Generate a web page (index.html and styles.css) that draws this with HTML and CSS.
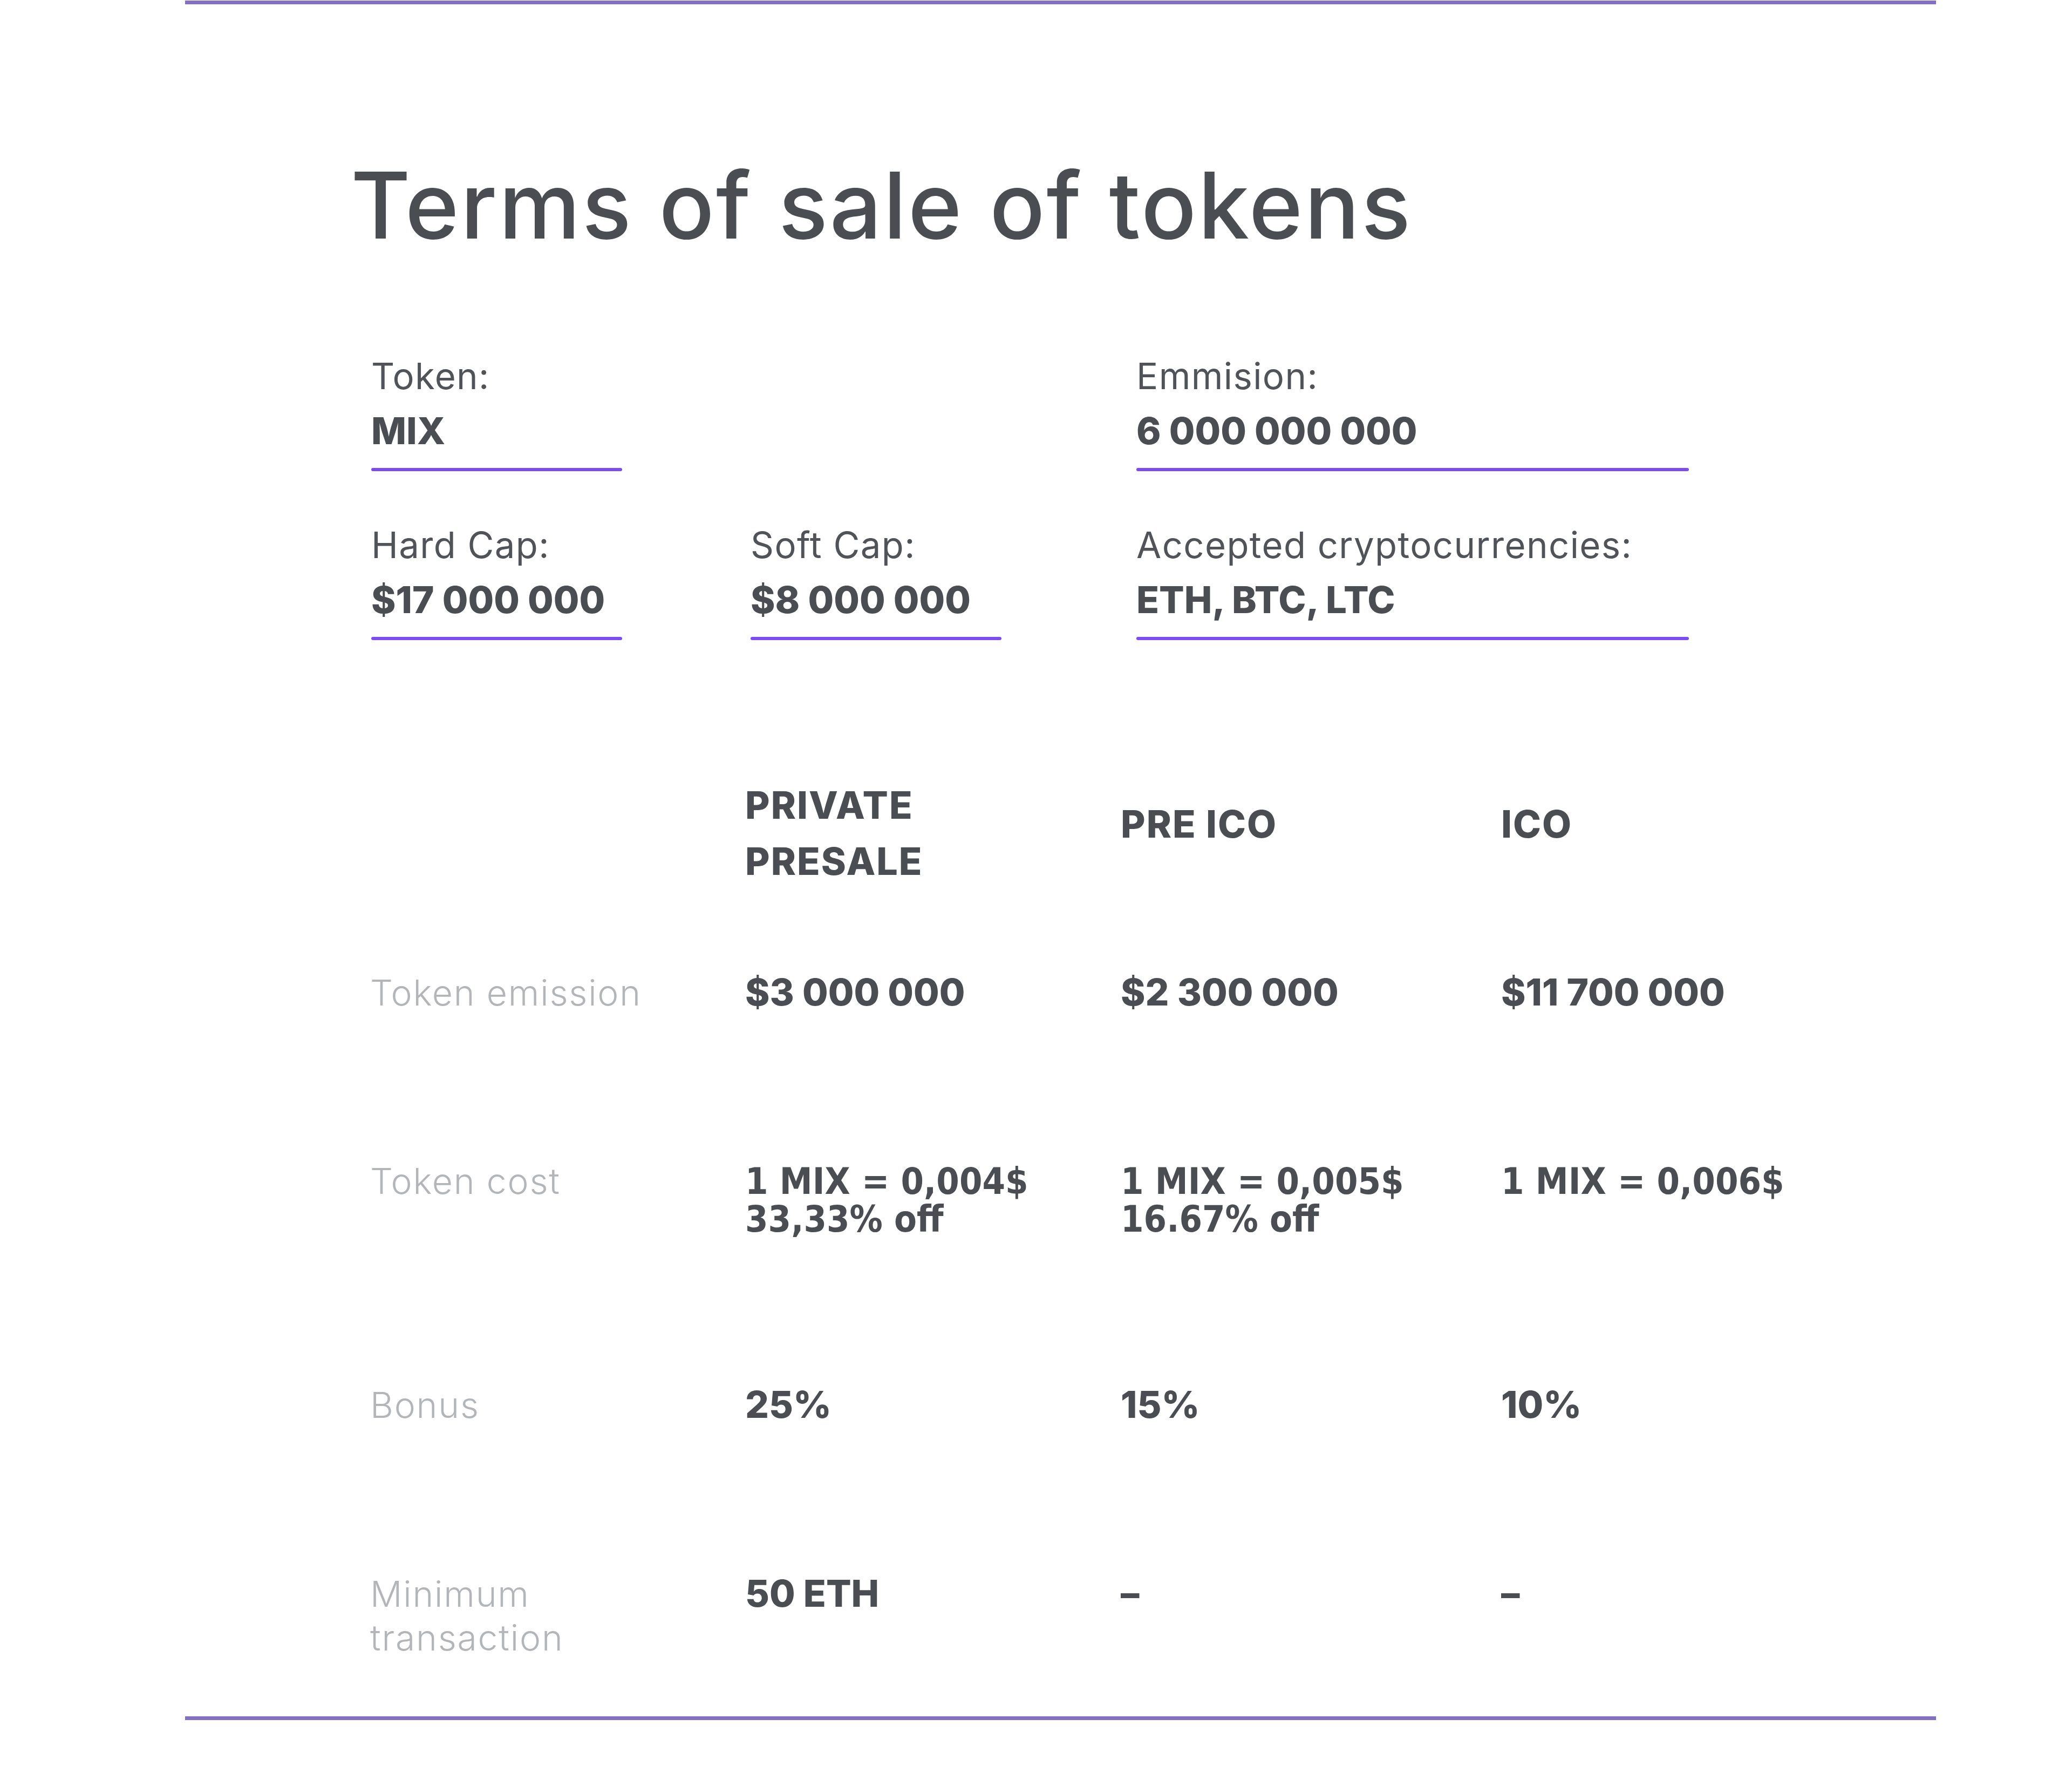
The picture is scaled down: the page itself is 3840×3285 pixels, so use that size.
FILE: index.html
```html
<!DOCTYPE html>
<html lang="en">
<head>
<meta charset="utf-8">
<title>Terms of sale of tokens</title>
<link rel="stylesheet" href="styles.css">
</head>
<body>
<div class="page">
  <h1 class="title">Terms of sale of tokens</h1>

  <div class="fields">
    <div class="field col-1">
      <div class="field-label">Token:</div>
      <div class="field-value">MIX</div>
    </div>
    <div class="field field-wide col-3">
      <div class="field-label">Emmision:</div>
      <div class="field-value">6 000 000 000</div>
    </div>
    <div class="field col-1">
      <div class="field-label">Hard Cap:</div>
      <div class="field-value">$17 000 000</div>
    </div>
    <div class="field col-2">
      <div class="field-label">Soft Cap:</div>
      <div class="field-value">$8 000 000</div>
    </div>
    <div class="field field-wide col-3">
      <div class="field-label">Accepted cryptocurrencies:</div>
      <div class="field-value">ETH, BTC, LTC</div>
    </div>
  </div>

  <div class="terms-head">
    <div></div>
    <div class="head-cell">PRIVATE<br>PRESALE</div>
    <div class="head-cell head-single">PRE ICO</div>
    <div class="head-cell head-single">ICO</div>
  </div>

  <div class="terms-body">
    <div class="row-label">Token emission</div>
    <div class="cell">$3 000 000</div>
    <div class="cell">$2 300 000</div>
    <div class="cell">$11 700 000</div>

    <div class="row-label">Token cost</div>
    <div class="cell cell-cost">1 MIX = 0,004$<br>33,33% off</div>
    <div class="cell cell-cost">1 MIX = 0,005$<br>16.67% off</div>
    <div class="cell cell-cost">1 MIX = 0,006$</div>

    <div class="row-label">Bonus</div>
    <div class="cell">25%</div>
    <div class="cell">15%</div>
    <div class="cell">10%</div>

    <div class="row-label">Minimum<br>transaction</div>
    <div class="cell">50 ETH</div>
    <div class="cell">–</div>
    <div class="cell">–</div>
  </div>
</div>
</body>
</html>
```

FILE: styles.css
```css
html, body {
  margin: 0;
  padding: 0;
  background: #ffffff;
}

body {
  font-family: Inter, "Liberation Sans", sans-serif;
  color: #4a4e52;
}

.page {
  box-sizing: border-box;
  width: 3245px;
  margin: 1px 0 0 343px;
  padding: 286px 0 105px 345px;
  border-top: 7px solid #8470c2;
  border-bottom: 7px solid #8470c2;
}

.title {
  margin: 0 0 0 -38px;
  font-family: Inter, "Liberation Sans", sans-serif;
  font-weight: 500;
  font-size: 170px;
  line-height: 173px;
  letter-spacing: 3px;
  color: #4a4e53;
}

.fields {
  display: grid;
  grid-template-columns: 703px 715px 1024px;
  row-gap: 97px;
  margin-top: 190px;
}

.col-1 { grid-column: 1; }
.col-2 { grid-column: 2; }
.col-3 { grid-column: 3; }

.field {
  width: 465px;
}

.field-wide {
  width: 1024px;
}

.field::after {
  content: "";
  display: block;
  height: 6px;
  margin-top: 24px;
  border-radius: 3px;
  background: #7b4cf2;
}

.field-label {
  font-weight: 400;
  font-size: 67px;
  line-height: 80px;
  letter-spacing: 1.4px;
  color: #505458;
}

.field-value {
  margin-top: 16px;
  font-weight: 800;
  font-size: 69px;
  line-height: 90px;
  color: #4a4e52;
}

.terms-head,
.terms-body {
  display: grid;
  grid-template-columns: 695px 696px 705px 1fr;
  margin-left: -2px;
}

.terms-head {
  margin-top: 254px;
  align-items: start;
}

.head-cell {
  font-weight: 800;
  font-size: 70px;
  line-height: 104px;
  letter-spacing: 2px;
  color: #4a4e52;
}

.head-single {
  margin-top: 35px;
}

.terms-body {
  margin-top: 150px;
  row-gap: 268px;
  align-items: baseline;
}

.row-label {
  font-weight: 300;
  font-size: 66px;
  line-height: 81px;
  letter-spacing: 1.8px;
  color: #b3b5b9;
}

.cell {
  font-weight: 800;
  font-size: 69px;
  line-height: 81px;
  color: #4a4e52;
}

.cell-cost {
  font-family: "DejaVu Sans Condensed", "DejaVu Sans", sans-serif;
  font-weight: 700;
  font-size: 68px;
  line-height: 70px;
}
```
